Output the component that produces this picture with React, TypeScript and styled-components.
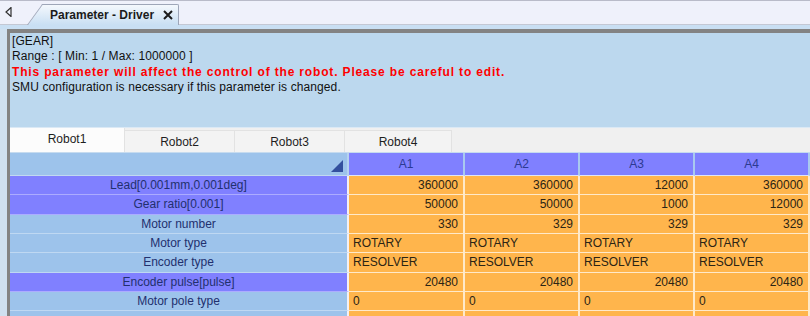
import { createGlobalStyle, styled } from "styled-components";

const GlobalStyle = createGlobalStyle`
  html, body {
    margin: 0;
    padding: 0;
    background: #eef0fa;
  }
  body {
    font-family: "Liberation Sans", Arial, sans-serif;
  }
  * {
    box-sizing: border-box;
  }
`;

const Window = styled.div`
  width: 810px;
  height: 316px;
  overflow: hidden;
  display: flex;
  flex-direction: column;
  background: #eef0fa;
  font-size: 12px;
`;

const DocStrip = styled.div`
  flex: none;
  height: 25px;
  display: flex;
  align-items: flex-end;
  background: #eff1fb;
  border-top: 1px solid #b9bbc9;
  border-bottom: 1px solid #c4c8d4;
`;

const ScrollArrow = styled.div`
  width: 17px;
  align-self: stretch;
  display: flex;
  align-items: center;
  justify-content: center;
  padding-bottom: 2px;
`;

const DocTab = styled.div`
  position: relative;
  isolation: isolate;
  height: 21px;
  margin-left: 10px;
  margin-bottom: -1px;
  padding: 0 6px 0 23px;
  display: flex;
  align-items: center;
  gap: 9px;
  font-weight: bold;
  color: #1b1b1b;

  &::before {
    content: "";
    position: absolute;
    z-index: -1;
    left: 0;
    top: 0;
    bottom: 0;
    width: 30px;
    background: linear-gradient(#f4f8fd, #c9dff3);
    border-left: 1px solid #9ea6b8;
    border-top: 1px solid #9ea6b8;
    transform: skewX(-36deg);
    transform-origin: bottom left;
  }

  &::after {
    content: "";
    position: absolute;
    z-index: -1;
    left: 16px;
    right: 0;
    top: 0;
    bottom: 0;
    background: linear-gradient(#f4f8fd, #c9dff3);
    border-top: 1px solid #9ea6b8;
    border-right: 1px solid #9ea6b8;
    border-top-right-radius: 2px;
  }
`;

const Band = styled.div`
  flex: none;
  height: 4px;
  background: #c9dff3;
`;

const Body = styled.div`
  flex: 1;
  display: flex;
  padding-left: 7px;
  background: #cfe0f0;
  min-height: 0;
`;

const Panel = styled.div`
  flex: 1;
  display: flex;
  flex-direction: column;
  border-top: 4px solid #838383;
  border-left: 3px solid #838383;
  background: #f0f0f0;
  min-width: 0;
`;

const InfoBox = styled.div`
  flex: none;
  height: 95px;
  padding: 1px 2px;
  background: #bcd8ee;
  border-bottom: 1px solid #dbe9f5;
  line-height: 15.4px;
  color: #111;
`;

const InfoLine = styled.div<{ $warn?: boolean }>`
  white-space: nowrap;
  color: ${(p) => (p.$warn ? "#ff0000" : "#111")};
  font-weight: ${(p) => (p.$warn ? "bold" : "normal")};
  letter-spacing: ${(p) => (p.$warn ? "0.84px" : "0.1px")};
`;

const RobotTabs = styled.div`
  flex: none;
  height: 25px;
  display: flex;
  align-items: flex-end;
  background: #f0f0f0;
  border-bottom: 1px solid #c6dbef;
`;

const RobotTab = styled.div<{ $active?: boolean; $w: number }>`
  width: ${(p) => p.$w}px;
  height: ${(p) => (p.$active ? 24 : 22)}px;
  padding-top: ${(p) => (p.$active ? 4 : 4)}px;
  text-align: center;
  line-height: 14px;
  color: #1e1e1e;
  background: ${(p) => (p.$active ? "#fcfcfc" : "#f3f3f3")};
  border-top: ${(p) => (p.$active ? "none" : "1px solid #e2e2e2")};
  border-right: 1px solid #e2e2e2;
`;

const Grid = styled.div`
  display: grid;
  grid-template-columns: 339px 116px 115px 115px 115px;
  grid-auto-rows: 19.33px;
  grid-template-rows: 23px;
  line-height: 14px;
`;

const Corner = styled.div`
  display: flex;
  justify-content: flex-end;
  align-items: flex-end;
  padding: 0 4px 3px 0;
  background: #9dc3eb;
  border-right: 2px solid #b6d2f0;
  border-bottom: 1px solid #c2d9f1;
`;

const ColHead = styled.div`
  display: flex;
  align-items: center;
  justify-content: center;
  background: #8080ff;
  color: #2c3a92;
  border-right: 2px solid #a9c9ef;
  border-bottom: 1px solid #dfe6f8;
`;

const RowHead = styled.div<{ $accent?: boolean }>`
  display: flex;
  align-items: center;
  justify-content: center;
  white-space: nowrap;
  background: ${(p) => (p.$accent ? "#8080ff" : "#9dc3eb")};
  color: #22306e;
  border-right: 2px solid #f4f0f4;
  border-bottom: 1px solid rgba(255, 255, 255, 0.35);
`;

const DataCell = styled.div<{ $align: "left" | "right" }>`
  display: flex;
  align-items: center;
  justify-content: ${(p) => (p.$align === "right" ? "flex-end" : "flex-start")};
  padding: 0 5px 0 4px;
  white-space: nowrap;
  background: #ffb54c;
  color: #2b2414;
  border-right: 2px solid rgba(255, 255, 255, 0.7);
  border-bottom: 1px solid rgba(255, 255, 255, 0.7);
`;

type Row = {
  label: string;
  accent?: boolean;
  align: "left" | "right";
  values: string[];
};

const rows: Row[] = [
  { label: "Lead[0.001mm,0.001deg]", accent: true, align: "right", values: ["360000", "360000", "12000", "360000"] },
  { label: "Gear ratio[0.001]", accent: true, align: "right", values: ["50000", "50000", "1000", "12000"] },
  { label: "Motor number", align: "right", values: ["330", "329", "329", "329"] },
  { label: "Motor type", align: "left", values: ["ROTARY", "ROTARY", "ROTARY", "ROTARY"] },
  { label: "Encoder type", align: "left", values: ["RESOLVER", "RESOLVER", "RESOLVER", "RESOLVER"] },
  { label: "Encoder pulse[pulse]", accent: true, align: "right", values: ["20480", "20480", "20480", "20480"] },
  { label: "Motor pole type", align: "left", values: ["0", "0", "0", "0"] },
  { label: "", align: "left", values: ["", "", "", ""] },
];

const robots = [
  { name: "Robot1", w: 115 },
  { name: "Robot2", w: 110 },
  { name: "Robot3", w: 110 },
  { name: "Robot4", w: 107 },
];

const App = () => {
  return (
    <>
      <GlobalStyle />
      <Window>
        <DocStrip>
          <ScrollArrow>
            <svg width="7" height="10" viewBox="0 0 7 10">
              <polygon points="6,0.5 6,9.5 1,5" fill="none" stroke="#303030" strokeWidth="1.2" />
            </svg>
          </ScrollArrow>
          <DocTab>
            <span>Parameter - Driver</span>
            <svg width="10" height="10" viewBox="0 0 10 10">
              <path d="M1 1 L9 9 M9 1 L1 9" stroke="#1b1b1b" strokeWidth="2" />
            </svg>
          </DocTab>
        </DocStrip>
        <Band />
        <Body>
          <Panel>
            <InfoBox>
              <InfoLine>[GEAR]</InfoLine>
              <InfoLine>Range : [ Min: 1 / Max: 1000000 ]</InfoLine>
              <InfoLine $warn>This parameter will affect the control of the robot. Please be careful to edit.</InfoLine>
              <InfoLine>SMU configuration is necessary if this parameter is changed.</InfoLine>
            </InfoBox>
            <RobotTabs>
              {robots.map((r, i) => (
                <RobotTab key={r.name} $w={r.w} $active={i === 0}>
                  {r.name}
                </RobotTab>
              ))}
            </RobotTabs>
            <Grid>
              <Corner>
                <svg width="12" height="12" viewBox="0 0 12 12">
                  <polygon points="12,0 12,12 0,12" fill="#34509e" />
                </svg>
              </Corner>
              {["A1", "A2", "A3", "A4"].map((a) => (
                <ColHead key={a}>{a}</ColHead>
              ))}
              {rows.map((row, ri) => (
                <>
                  <RowHead key={"h" + ri} $accent={row.accent}>
                    {row.label}
                  </RowHead>
                  {row.values.map((v, ci) => (
                    <DataCell key={ri + "-" + ci} $align={row.align}>
                      {v}
                    </DataCell>
                  ))}
                </>
              ))}
            </Grid>
          </Panel>
        </Body>
      </Window>
    </>
  );
};

export default App;
